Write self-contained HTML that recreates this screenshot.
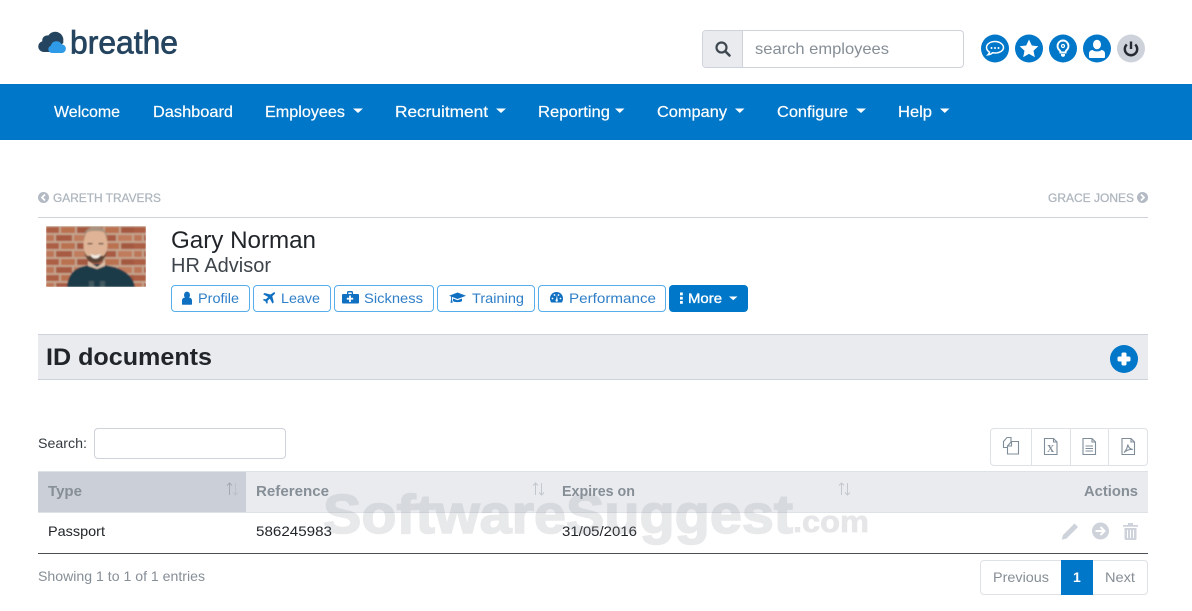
<!DOCTYPE html>
<html><head><meta charset="utf-8"><title>breathe - ID documents</title>
<style>
html,body{margin:0;padding:0;background:#fff;width:1192px;height:611px;overflow:hidden}
svg{display:block}
text{font-family:"Liberation Sans",sans-serif;white-space:pre}
.nav{fill:#fff;font-size:16px;stroke:#fff;stroke-width:.2px}
.btn{fill:#2f7fc8;font-size:14px}
.th{fill:#868e96;font-size:14.5px;font-weight:bold}
.td{fill:#212529;font-size:14px}
.crumb{fill:#adb5bd;font-size:12px;stroke:#adb5bd;stroke-width:.25px}
</style></head><body>
<svg xmlns="http://www.w3.org/2000/svg" width="1192" height="611" viewBox="0 0 1192 611">
<defs>
<pattern id="br" x="46" y="226" width="44" height="16" patternUnits="userSpaceOnUse">
<rect width="44" height="16" fill="#c4a48e"/>
<rect x="0" y="1" width="13" height="6" fill="#ad5f45"/><rect x="15" y="1" width="14" height="6" fill="#ba7150"/><rect x="31" y="1" width="13" height="6" fill="#a4583f"/>
<rect x="-4" y="9" width="12" height="6" fill="#bc7556"/><rect x="10" y="9" width="16" height="6" fill="#a85a43"/><rect x="28" y="9" width="14" height="6" fill="#c07c5c"/>
</pattern>
<filter id="bl"><feGaussianBlur stdDeviation="0.7"/></filter>
</defs>

<!-- logo -->
<path d="M43.500 52a5.500 5.500 0 0 1-1.200-10.800 5 5 0 0 1 6-5.700 8.200 8.200 0 0 1 15 5.500v2L52 52z" fill="#24445f"/>
<path d="M52 53a3.700 3.700 0 0 1-1.200-7.200 5.800 5.800 0 0 1 10.800-1.500 4.400 4.400 0 0 1 .8 8.700z" fill="#2f9be8"/>
<text x="70" y="53.500" font-size="32" fill="#24445f" stroke="#24445f" stroke-width=".7" textLength="108" lengthAdjust="spacingAndGlyphs">breathe</text>

<!-- search -->
<rect x="702.500" y="30.500" width="261" height="37" rx="3.500" fill="#fff" stroke="#ced2da"/>
<path d="M703 34a3 3 0 0 1 3-3h36v36h-36a3 3 0 0 1-3-3z" fill="#e9ebef"/>
<line x1="742.500" y1="31" x2="742.500" y2="67" stroke="#ced2da"/>
<circle cx="721.500" cy="47.500" r="5" fill="none" stroke="#3f4850" stroke-width="2.200"/>
<line x1="725.500" y1="51.500" x2="729.500" y2="55.500" stroke="#3f4850" stroke-width="2.600" stroke-linecap="round"/>
<text x="755" y="54" font-size="16" fill="#868e96" textLength="134" lengthAdjust="spacingAndGlyphs">search employees</text>

<!-- top icons -->
<circle cx="995" cy="48.500" r="14" fill="#0077c8"/>
<path d="M995 41.500c-5 0-8.500 2.800-8.500 6 0 1.900 1.200 3.500 3 4.600-.2 1-.8 2-1.500 2.700 1.800-.2 3.300-.9 4.500-2 .8.100 1.600.2 2.500.2 5 0 8.500-2.600 8.500-5.500s-3.500-6-8.500-6z" fill="none" stroke="#fff" stroke-width="1.500"/>
<circle cx="991.500" cy="48" r="1" fill="#fff"/><circle cx="995" cy="48" r="1" fill="#fff"/><circle cx="998.500" cy="48" r="1" fill="#fff"/>
<circle cx="1029" cy="48.500" r="14" fill="#0077c8"/>
<path d="M1029 39.500l2.800 6 6.500.8-4.800 4.400 1.300 6.400-5.800-3.200-5.800 3.200 1.300-6.400-4.800-4.400 6.500-.8z" fill="#fff"/>
<circle cx="1063" cy="48.500" r="14" fill="#0077c8"/>
<path d="M1063 40.500a5.500 5.500 0 0 0-3.500 9.700c.7.700 1 1.500 1 2.300h5c0-.8.300-1.600 1-2.300a5.500 5.500 0 0 0-3.500-9.700z" fill="none" stroke="#fff" stroke-width="2"/>
<path d="M1061 54h4v1.500l-1 1.200h-2l-1-1.200z" fill="#fff"/>
<circle cx="1063" cy="46" r="1.500" fill="none" stroke="#fff" stroke-width="1.200"/>
<circle cx="1097" cy="48.500" r="14" fill="#0077c8"/>
<ellipse cx="1097" cy="44.500" rx="4" ry="4.800" fill="#fff"/>
<path d="M1089 57v-3.500c0-2 1.500-3.300 3.500-3.500 1.200 1 2.800 1.400 4.500 1.400s3.300-.4 4.500-1.400c2 .2 3.500 1.500 3.500 3.500v3.500a1 1 0 0 1-1 1h-14a1 1 0 0 1-1-1z" fill="#fff"/>
<circle cx="1131" cy="48.500" r="14" fill="#ced2da"/>
<path d="M1126.800 44.500a6.200 6.200 0 1 0 8.400 0" fill="none" stroke="#262b33" stroke-width="2.400"/>
<line x1="1131" y1="41.500" x2="1131" y2="49" stroke="#262b33" stroke-width="2.400"/>

<!-- nav -->
<rect x="0" y="84" width="1192" height="56" fill="#0077c8"/>
<text class="nav" x="54" y="117" textLength="66" lengthAdjust="spacingAndGlyphs">Welcome</text>
<text class="nav" x="153" y="117" textLength="80" lengthAdjust="spacingAndGlyphs">Dashboard</text>
<text class="nav" x="265" y="117" textLength="80" lengthAdjust="spacingAndGlyphs">Employees</text>
<text class="nav" x="395" y="117" textLength="93" lengthAdjust="spacingAndGlyphs">Recruitment</text>
<text class="nav" x="538" y="117" textLength="72" lengthAdjust="spacingAndGlyphs">Reporting</text>
<text class="nav" x="657" y="117" textLength="70" lengthAdjust="spacingAndGlyphs">Company</text>
<text class="nav" x="777" y="117" textLength="71" lengthAdjust="spacingAndGlyphs">Configure</text>
<text class="nav" x="898" y="117" textLength="34" lengthAdjust="spacingAndGlyphs">Help</text>
<g fill="#fff">
<path d="M353 108.500h10l-5 4.500z"/><path d="M496 108.500h10l-5 4.500z"/><path d="M615 108.500h9.500l-4.750 4.500z"/><path d="M735 108.500h9.500l-4.750 4.500z"/><path d="M856 108.500h10l-5 4.500z"/><path d="M940 108.500h9.500l-4.750 4.500z"/>
</g>

<!-- prev/next -->
<circle cx="43.500" cy="197.500" r="5.500" fill="#b3bac4"/>
<path d="M45 194.500l-3 3 3 3" fill="none" stroke="#fff" stroke-width="1.800"/>
<text class="crumb" x="53" y="202" textLength="108" lengthAdjust="spacingAndGlyphs">GARETH TRAVERS</text>
<text class="crumb" x="1048" y="202" textLength="86" lengthAdjust="spacingAndGlyphs">GRACE JONES</text>
<circle cx="1142.500" cy="197.500" r="5.500" fill="#b3bac4"/>
<path d="M1141 194.500l3 3-3 3" fill="none" stroke="#fff" stroke-width="1.800"/>
<rect x="38" y="217" width="1110" height="1" fill="#ced2da"/>

<!-- photo -->
<svg x="46" y="226" width="100" height="61" viewBox="46 226 100 61">
<g filter="url(#bl)">
<rect x="46" y="226" width="100" height="61" fill="url(#br)"/>
<path d="M67 287c1-11 6-19 18-21l7-2h9l8 2c13 2 24 9 26 21z" fill="#1f3a48"/>
<path d="M88 261l9 6 8-6v5l-8 3-9-3z" fill="#dcc0a8"/>
<ellipse cx="95.500" cy="245" rx="12" ry="17.500" fill="#dfb496"/>
<path d="M83.500 240c-.5-8 5-13.500 12-13.500s12.500 5.500 12 13.500c-1-4-2-7-4-8-5-1.500-11-1.500-16 0-2 1-3.500 4-4 8z" fill="#a8927e"/>
<path d="M84 250c1 7 4 13 11.500 13s10.500-6 11.500-13c-2 5-3 6-5 6-4-1.500-9-1.500-13 0-2 0-3.500-1-5-6z" fill="#5a4234"/>
<path d="M90 254c3 1.500 8 1.500 11 0-1 3-3 4.500-5.500 4.500s-4.500-1.500-5.500-4.500z" fill="#f4ece4"/>
<rect x="87.500" y="243" width="5" height="1.300" fill="#5a4234"/><rect x="98.500" y="243" width="5" height="1.300" fill="#5a4234"/>
<path d="M89 281h5v6h-5zM100 281h5v6h-5z" fill="#3f5860"/>
</g>
</svg>

<!-- name -->
<text x="171" y="248" font-size="24" fill="#212529" textLength="145" lengthAdjust="spacingAndGlyphs">Gary Norman</text>
<text x="171" y="272" font-size="20" fill="#3d444b" textLength="100" lengthAdjust="spacingAndGlyphs">HR Advisor</text>

<!-- buttons -->
<g fill="#fff" stroke="#58aeeb">
<rect x="171.500" y="285.500" width="78" height="26" rx="3.500"/>
<rect x="253.500" y="285.500" width="77" height="26" rx="3.500"/>
<rect x="334.500" y="285.500" width="99" height="26" rx="3.500"/>
<rect x="437.500" y="285.500" width="97" height="26" rx="3.500"/>
<rect x="538.500" y="285.500" width="127" height="26" rx="3.500"/>
</g>
<rect x="669" y="285" width="79" height="27" rx="4" fill="#0077c8"/>
<text class="btn" x="198" y="303" textLength="41" lengthAdjust="spacingAndGlyphs">Profile</text>
<text class="btn" x="281" y="303" textLength="39" lengthAdjust="spacingAndGlyphs">Leave</text>
<text class="btn" x="364" y="303" textLength="59" lengthAdjust="spacingAndGlyphs">Sickness</text>
<text class="btn" x="472" y="303" textLength="52" lengthAdjust="spacingAndGlyphs">Training</text>
<text class="btn" x="569" y="303" textLength="87" lengthAdjust="spacingAndGlyphs">Performance</text>
<text x="688" y="303" font-size="14" fill="#fff" stroke="#fff" stroke-width=".35" textLength="34" lengthAdjust="spacingAndGlyphs">More</text>
<!-- button icons -->
<g fill="#0f6fc0">
<ellipse cx="187" cy="295" rx="3" ry="3.400"/>
<path d="M182 304v-3.500c0-1.800 1.500-2.800 3-3h4c1.500.2 3 1.200 3 3v3.500a.8.800 0 0 1-.8.800h-8.400a.8.800 0 0 1-.8-.800z"/>
<path d="M273.500 292.500c1.200-.7 2-.1 1.400 1.200l-2.600 2.600 1.500 6-1.300 1.300-2.700-5-2.300 2.300.3 2-1 1-1.400-2.500-2.500-1.400 1-1 2 .3 2.300-2.300-5-2.700 1.300-1.300 6 1.500z"/>
<path d="M347 294v-1.500a1.500 1.500 0 0 1 1.500-1.500h3a1.500 1.500 0 0 1 1.500 1.500v1.500h5a1 1 0 0 1 1 1v7.500a1 1 0 0 1-1 1h-15a1 1 0 0 1-1-1v-7.500a1 1 0 0 1 1-1zm1.300-1.500v1.500h3.400v-1.500z" fill-rule="evenodd"/>
<rect x="349.100" y="295.500" width="1.800" height="6.500" fill="#fff"/><rect x="346.800" y="297.800" width="6.400" height="1.800" fill="#fff"/>
<path d="M457.500 292.500l8.500 3.200-8.500 3.300-5.500-2.100v2.600l.7 3.200h-2.200l.6-3.400v-2.800l-2-.8z"/>
<path d="M453 298.500l4.500 1.800 4.500-1.800v2.500c-1 1.500-8 1.500-9 0z"/>
<path d="M556.500 292c-3.800 0-6.500 3-6.500 6.500 0 1.500.4 2.800 1.200 4h10.600c.8-1.200 1.200-2.500 1.200-4 0-3.500-2.700-6.500-6.500-6.500z"/>
</g>
<g fill="#fff">
<circle cx="552.500" cy="298.500" r=".9"/><circle cx="554.500" cy="295" r=".9"/><circle cx="560.500" cy="298.500" r=".9"/><circle cx="558.500" cy="295" r=".9"/>
<path d="M556 300l1-5 .6 5z"/><circle cx="556.700" cy="300.500" r="1.200"/>
<rect x="680" y="292.500" width="2.800" height="2.800"/><rect x="680" y="296.800" width="2.800" height="2.800"/><rect x="680" y="301" width="2.800" height="2.800"/>
<path d="M729 296.500h8.500l-4.250 3.800z"/>
</g>

<!-- heading band -->
<rect x="38" y="334" width="1110" height="46" fill="#e9ebef"/>
<rect x="38" y="334" width="1110" height="1" fill="#ced2da"/>
<rect x="38" y="379" width="1110" height="1" fill="#ced2da"/>
<text x="46" y="365" font-size="24" font-weight="bold" fill="#212529" textLength="166" lengthAdjust="spacingAndGlyphs">ID documents</text>
<circle cx="1124" cy="359" r="14" fill="#0077c8"/>
<rect x="1121.500" y="352.500" width="5" height="13" rx="1.500" fill="#fff"/><rect x="1117.500" y="356.500" width="13" height="5" rx="1.500" fill="#fff"/>

<!-- search row -->
<text x="38" y="448" font-size="14" fill="#343a40" textLength="49" lengthAdjust="spacingAndGlyphs">Search:</text>
<rect x="94.500" y="428.500" width="191" height="30" rx="3.500" fill="#fff" stroke="#ced2da"/>

<!-- export buttons -->
<rect x="990.500" y="428.500" width="157" height="37" rx="3.500" fill="#fff" stroke="#dee2e6"/>
<line x1="1031.500" y1="429" x2="1031.500" y2="465" stroke="#dee2e6"/>
<line x1="1070.500" y1="429" x2="1070.500" y2="465" stroke="#dee2e6"/>
<line x1="1108.500" y1="429" x2="1108.500" y2="465" stroke="#dee2e6"/>
<g fill="none" stroke="#7f8c99" stroke-width="1.100">
<path d="M1008 447.500h-4.500v-6l3.500-4h4v5"/><path d="M1011.500 441.500l-4 4.500v8h11v-12.500z" fill="#fff"/><path d="M1011.500 441.500v4.500h-4"/>
<path d="M1044.500 438.500h9l3.500 3.500v12.500h-12.500zM1053.500 438.500v3.500h3.500"/>
<path d="M1083 438.500h9l3.500 3.500v12.500h-12.500zM1092 438.500v3.500h3.500M1085.500 446h7.500M1085.500 448.500h7.500M1085.500 451h7.500"/>
<path d="M1122 438.500h9l3.500 3.500v12.500h-12.500zM1131 438.500v3.500h3.500"/>
<path d="M1124 452.500c2-2 3.500-5 3.800-8 .5 3 2 4.500 5 5-3-.2-6.500.8-8.800 3z"/>
</g>
<text x="1047" y="452" font-size="10" font-weight="bold" fill="#7f8c99" style="font-family:'Liberation Serif',serif">X</text>

<!-- table -->
<rect x="38" y="471" width="1110" height="41" fill="#e9ebef"/>
<rect x="38" y="472" width="208" height="40" fill="#cbd0d8"/>
<rect x="38" y="471" width="1110" height="1" fill="#dee2e6"/>
<rect x="38" y="512" width="1110" height="1" fill="#dee2e6"/>
<text class="th" x="48" y="496" textLength="34" lengthAdjust="spacingAndGlyphs">Type</text>
<text class="th" x="256" y="496" textLength="73" lengthAdjust="spacingAndGlyphs">Reference</text>
<text class="th" x="562" y="496" textLength="73" lengthAdjust="spacingAndGlyphs">Expires on</text>
<text class="th" x="1084" y="496" textLength="54" lengthAdjust="spacingAndGlyphs">Actions</text>
<g fill="none" stroke-width="1">
<path d="M229.500 495v-12M227 485.500l2.500-2.500 2.500 2.500" stroke="#a3a9b1"/><path d="M235.500 483v12M233 492.500l2.500 2.500 2.500-2.500" stroke="#bcc2ca"/>
<path d="M535.500 495v-12M533 485.500l2.500-2.500 2.500 2.500" stroke="#c3c8cf"/><path d="M541.500 483v12M539 492.500l2.500 2.500 2.500-2.500" stroke="#c3c8cf"/>
<path d="M841.500 495v-12M839 485.500l2.500-2.500 2.500 2.500" stroke="#c3c8cf"/><path d="M847.500 483v12M845 492.500l2.500 2.500 2.500-2.500" stroke="#c3c8cf"/>
</g>
<text class="td" x="48" y="536" textLength="57" lengthAdjust="spacingAndGlyphs">Passport</text>
<text class="td" x="256" y="536" textLength="76" lengthAdjust="spacingAndGlyphs">586245983</text>
<text class="td" x="562" y="536" textLength="75" lengthAdjust="spacingAndGlyphs">31/05/2016</text>
<g fill="#ced2da">
<path d="M1074.500 523.500l3.500 3.500-11.500 11.500-4.800 1.300 1.300-4.800z"/>
<circle cx="1100.500" cy="531" r="8.500"/>
<path d="M1123 525h15v1.800h-15zM1128 523h5v2h-5zM1124.500 528h12v10.500a1.500 1.500 0 0 1-1.500 1.500h-9a1.500 1.500 0 0 1-1.500-1.500z"/>
</g>
<path d="M1095.500 531h8M1100.500 527l4 4-4 4" fill="none" stroke="#fff" stroke-width="2"/>
<path d="M1127.500 530v8M1130.500 530v8M1133.500 530v8" stroke="#fff" stroke-width="1"/>
<rect x="38" y="553" width="1110" height="1" fill="#495057"/>

<!-- footer -->
<text x="38" y="581" font-size="14" fill="#868e96" textLength="167" lengthAdjust="spacingAndGlyphs">Showing 1 to 1 of 1 entries</text>
<rect x="980.500" y="560.500" width="167" height="34" rx="3.500" fill="#fff" stroke="#dee2e6"/>
<rect x="1061" y="560" width="32" height="35" fill="#0077c8"/>
<text x="993" y="582" font-size="14" fill="#868e96" textLength="56" lengthAdjust="spacingAndGlyphs">Previous</text>
<text x="1073" y="582" font-size="14" font-weight="bold" fill="#fff">1</text>
<text x="1105" y="582" font-size="14" fill="#868e96" textLength="30" lengthAdjust="spacingAndGlyphs">Next</text>

<!-- watermark -->
<text x="323" y="533" font-size="55" font-weight="bold" fill="#8f939a" stroke="#8f939a" stroke-width="1.600" opacity=".2" textLength="470" lengthAdjust="spacingAndGlyphs">SoftwareSuggest</text>
<text x="793" y="532" font-size="31" font-weight="bold" fill="#8f939a" stroke="#8f939a" stroke-width=".8" opacity=".22" textLength="76" lengthAdjust="spacingAndGlyphs">.com</text>
</svg>
</body></html>
